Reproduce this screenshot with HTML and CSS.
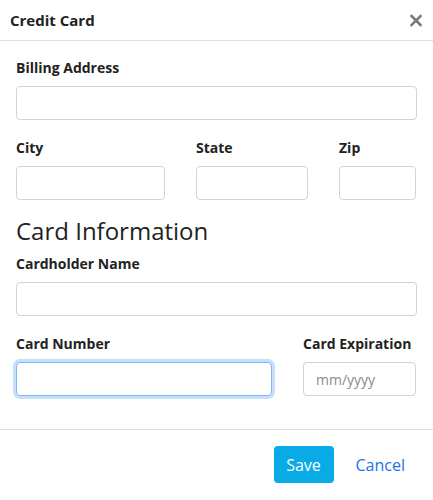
FILE: index.html
```html
<!DOCTYPE html>
<html lang="en">
<head>
    <meta charset="UTF-8">
    <meta name="viewport" content="width=device-width, initial-scale=1.0">
    <title>Credit Card</title>
    <link rel="stylesheet" href="styles.css">
</head>
<body>
    <div class="modal">
        <header class="modal-header">
            <span class="modal-title">Credit Card</span>
            <button class="close" aria-label="Close">
                <svg width="12" height="13" viewBox="0 0 12 13">
                    <path d="M1.5 2 L10.5 11 M10.5 2 L1.5 11" stroke="#7a7a7a" stroke-width="2.6" stroke-linecap="square"/>
                </svg>
            </button>
        </header>
        <div class="modal-body">
            <div class="group">
                <label>Billing Address</label>
                <input type="text" class="field">
            </div>
            <div class="row row-address">
                <div class="group">
                    <label>City</label>
                    <input type="text" class="field">
                </div>
                <div class="group">
                    <label>State</label>
                    <input type="text" class="field">
                </div>
                <div class="group">
                    <label>Zip</label>
                    <input type="text" class="field">
                </div>
            </div>
            <h2 class="section-title">Card Information</h2>
            <div class="group">
                <label>Cardholder Name</label>
                <input type="text" class="field">
            </div>
            <div class="row row-card">
                <div class="group">
                    <label>Card Number</label>
                    <input type="text" class="field focused">
                </div>
                <div class="group">
                    <label>Card Expiration</label>
                    <input type="text" class="field" placeholder="mm/yyyy">
                </div>
            </div>
        </div>
        <footer class="modal-footer">
            <button class="btn btn-save">Save</button>
            <button class="btn btn-cancel">Cancel</button>
        </footer>
    </div>
</body>
</html>
```

FILE: styles.css
```css
html, body {
    height: 100%;
}

body {
    margin: 0;
    background: #fff;
    font-family: "Open Sans", "Liberation Sans", sans-serif;
    color: #212529;
}

.modal {
    width: 433px;
    height: 500px;
    background: #fff;
}

.modal-header {
    height: 40px;
    padding: 0 10px;
    display: flex;
    align-items: center;
    justify-content: space-between;
    border-bottom: 1px solid #dedede;
}

.modal-title {
    font-size: 15px;
    font-weight: 700;
    color: #222;
}

.close {
    border: none;
    background: none;
    padding: 0;
    width: 12px;
    height: 13px;
    margin-right: 1px;
    margin-top: 1px;
    display: flex;
}

.modal-body {
    padding: 17px 16px 15px;
}

.group {
    display: flex;
    flex-direction: column;
    margin-bottom: 18px;
}

.group label {
    font-size: 14px;
    font-weight: 700;
    line-height: 20px;
    margin-bottom: 8px;
    color: #222;
}

.row {
    display: grid;
    column-gap: 31px;
}

.row-address {
    grid-template-columns: 149px 112px 77px;
}

.row-card {
    grid-template-columns: 256px 113px;
}

.field {
    box-sizing: border-box;
    height: 34px;
    width: 100%;
    border: 1px solid #ced4da;
    border-radius: 4px;
    padding: 0 12px;
    font-family: inherit;
    font-size: 14px;
    color: #333;
    outline: none;
}

.field::placeholder {
    color: #8a8a8a;
}

.field.focused {
    border-color: #7cb9f4;
    box-shadow: 0 0 0 3px #c6e0fb;
}

.section-title {
    margin: 0 0 10px;
    font-size: 24px;
    font-weight: 400;
    line-height: 26px;
    color: #222;
}

.modal-footer {
    border-top: 1px solid #dedede;
    padding: 16px 16px 0;
    display: flex;
    justify-content: flex-end;
    gap: 10px;
}

.btn {
    height: 37px;
    border: none;
    border-radius: 4px;
    font-family: inherit;
    font-size: 16px;
    padding: 0 12px;
    background: none;
}

.btn-save {
    width: 60px;
    background: #08abe6;
    color: #fff;
}

.btn-cancel {
    color: #1a73e8;
}
```
